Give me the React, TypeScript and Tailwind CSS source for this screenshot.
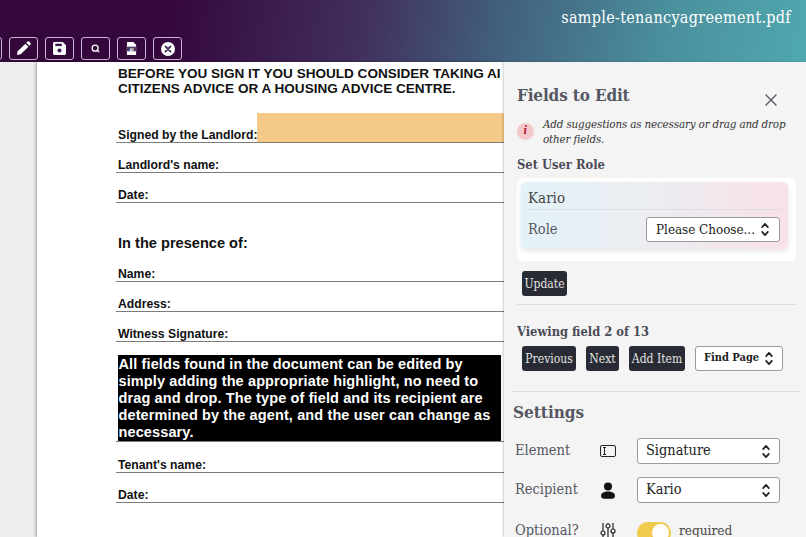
import React from "react";
import { X, Search } from "lucide-react";

const serif = "font-['DejaVu_Serif_Condensed','DejaVu_Serif',serif]";

function Chevs({ className = "" }: { className?: string }) {
  return (
    <svg viewBox="0 0 10 18" className={className} fill="none" stroke="currentColor" strokeWidth="1.8" strokeLinecap="round" strokeLinejoin="round">
      <path d="M2 6.5 5 3l3 3.5" />
      <path d="M2 11.5 5 15l3-3.5" />
    </svg>
  );
}

function ToolBtn({ children }: { children?: React.ReactNode }) {
  return (
    <div className="w-[29px] h-[23px] shrink-0 rounded-[3px] border border-[#c9b5d3] flex items-center justify-center text-white">
      {children}
    </div>
  );
}

function DocRow({ label }: { label: string }) {
  return (
    <div className="flex items-end h-[30px] border-b border-[#7c7c7c] pl-[2px] text-[12.2px] font-bold text-[#111] leading-[14px]">
      {label}
    </div>
  );
}

function DarkBtn({ children, className = "" }: { children: React.ReactNode; className?: string }) {
  return (
    <div className={"h-[25px] rounded-[3px] bg-[#292b34] text-[#e4e4e4] text-[12px] flex items-center justify-center whitespace-nowrap " + className}>
      {children}
    </div>
  );
}

function Select({ label, className = "" }: { label: string; className?: string }) {
  return (
    <div className={"bg-white border border-[#9a9a9a] rounded-[3px] flex items-center justify-between text-[#222] " + className}>
      <span className="whitespace-nowrap">{label}</span>
      <Chevs className="w-[10px] h-[17px] text-[#222] shrink-0" />
    </div>
  );
}

export default function App() {
  return (
    <div className="w-[806px] h-[537px] overflow-hidden flex flex-col bg-[#eeeeee]">
      <header className="h-[62px] shrink-0 bg-[linear-gradient(100deg,#33073a_0%,#35093e_22%,#41305c_45%,#42607e_62%,#4a8f9c_82%,#50a8ae_100%)] flex flex-col">
        <div className={"h-[25px] flex justify-end pr-[15px] pt-[9px] text-white text-[16px] leading-[18px] tracking-[0.3px] whitespace-nowrap " + serif}>
          sample-tenancyagreement.pdf
        </div>
        <div className="flex gap-[7px] pt-[12px] -ml-[27px]">
          <ToolBtn />
          <ToolBtn>
            <svg viewBox="0 0 16 16" className="w-[15px] h-[15px]" fill="white">
              <path d="M1 15l.8-4L10 2.8l3.2 3.2L5 14.2z" />
              <path d="M11 1.8l1-1a1.6 1.6 0 0 1 2.2 0l1 1a1.6 1.6 0 0 1 0 2.2l-1 1z" />
            </svg>
          </ToolBtn>
          <ToolBtn>
            <svg viewBox="0 0 14 14" className="w-[13px] h-[13px]">
              <path d="M1.5 0H10.5L14 3.5V12.5A1.5 1.5 0 0 1 12.5 14H1.5A1.5 1.5 0 0 1 0 12.5V1.5A1.5 1.5 0 0 1 1.5 0Z" fill="white" />
              <rect x="2.5" y="1.8" width="7" height="2.6" fill="#3a1a4a" />
              <circle cx="7" cy="9.2" r="2.2" fill="#3a1a4a" />
            </svg>
          </ToolBtn>
          <ToolBtn><Search size={9} strokeWidth={3.5} /></ToolBtn>
          <ToolBtn>
            <svg viewBox="0 0 12 14" className="w-[11px] h-[13px]">
              <path d="M1 0h7l3 3v11H1z" fill="white" />
              <rect x="0" y="5" width="12" height="5" fill="#4a3a66" />
              <text x="6" y="9.4" textAnchor="middle" fontSize="4.5" fill="white" fontFamily="Liberation Sans" fontWeight="700">AI</text>
            </svg>
          </ToolBtn>
          <ToolBtn>
            <svg viewBox="0 0 14 14" className="w-[14px] h-[14px]">
              <circle cx="7" cy="7" r="7" fill="white" />
              <path d="M4.5 4.5l5 5M9.5 4.5l-5 5" stroke="#41305c" strokeWidth="1.8" strokeLinecap="round" />
            </svg>
          </ToolBtn>
        </div>
      </header>

      <main className="flex-1 flex min-h-0">
        <div className="w-[37px] shrink-0 bg-[#eeeeee]" />
        <div className="w-[467px] shrink-0 bg-white shadow-[-1px_0_3px_rgba(0,0,0,0.35)] pl-[79px] font-['Liberation_Sans',sans-serif] overflow-hidden">
          <div className="pt-[4px] pl-[2px] text-[13.56px] font-bold leading-[15px] text-[#111] whitespace-nowrap">
            <div>BEFORE YOU SIGN IT YOU SHOULD CONSIDER TAKING AI</div>
            <div>CITIZENS ADVICE OR A HOUSING ADVICE CENTRE.</div>
          </div>
          <div className="mt-[17px] flex items-end h-[30px] border-b border-[#7c7c7c] pl-[2px] text-[12.2px] font-bold text-[#111] leading-[14px]">
            <span className="whitespace-nowrap">Signed by the Landlord:</span>
            <div className="flex-1 h-[29px] bg-[#f5c987]" />
          </div>
          <DocRow label="Landlord's name:" />
          <DocRow label="Date:" />
          <div className="mt-[31px] pl-[2px] text-[14.6px] font-bold leading-[18px] text-[#111]">In the presence of:</div>
          <DocRow label="Name:" />
          <DocRow label="Address:" />
          <DocRow label="Witness Signature:" />
          <div className="mt-[13px] ml-[2px] mr-[3px] h-[86px] bg-black text-white text-[14.5px] font-bold leading-[17px] pl-[0.5px] pt-[1px] tracking-[0.12px] overflow-hidden">
            <div className="whitespace-nowrap">All fields found in the document can be edited by</div>
            <div className="whitespace-nowrap">simply adding the appropriate highlight, no need to</div>
            <div className="whitespace-nowrap">drag and drop. The type of field and its recipient are</div>
            <div className="whitespace-nowrap">determined by the agent, and the user can change as</div>
            <div className="whitespace-nowrap">necessary.</div>
          </div>
          <div className="border-t border-[#7c7c7c] mb-[1px]" />
          <DocRow label="Tenant's name:" />
          <DocRow label="Date:" />
        </div>

        <aside className={"flex-1 min-w-0 bg-[#f4f4f4] shadow-[-1px_0_2px_rgba(0,0,0,0.2)] overflow-hidden " + serif}>
          <div className="pl-[13px] pr-[10px] pt-[21px]">
            <div className="flex justify-between items-start">
              <h2 className="text-[17px] font-bold tracking-[-0.15px] text-[#555763] leading-[24px]">Fields to Edit</h2>
              <X size={20} strokeWidth={1.6} className="text-[#55565f] mt-[7px] mr-[15px]" />
            </div>
            <div className="mt-[7px] flex gap-[9px] items-center">
              <div className="w-[17px] h-[17px] rounded-full bg-[#f3c9cc] text-[#b5202f] text-[11px] font-bold italic flex items-center justify-center shrink-0">i</div>
              <p className="text-[11.5px] italic tracking-[-0.15px] leading-[14.5px] text-[#333]">Add suggestions as necessary or drag and drop other fields.</p>
            </div>
            <div className="mt-[10px] text-[12.8px] font-bold text-[#4a4b55] leading-[18px]">Set User Role</div>
            <div className="mt-[4px] bg-white rounded-[6px] pt-[4px] pl-[4px] pr-[8px] pb-[12px] h-[83px]">
              <div className="rounded-[5px] bg-[linear-gradient(90deg,#e3f2f7,#ecedf2_50%,#f8e1e7)] shadow-[0_2px_5px_rgba(0,0,0,0.1)] pl-[7px] pr-[8px] pt-[5px] h-[67px]">
                <div className="text-[15px] text-[#444] leading-[22px] border-b border-[#dcdde2] h-[23px]">Kario</div>
                <div className="mt-[7px] flex items-center justify-between">
                  <span className="text-[14.5px] text-[#555763]">Role</span>
                  <Select label="Please Choose..." className="w-[134px] h-[25px] px-[9px] text-[13.3px]" />
                </div>
              </div>
            </div>
            <div className="mt-[10px] pl-[5px]"><DarkBtn className="w-[45px]">Update</DarkBtn></div>
          </div>
          <div className="ml-[13px] mr-[10px] mt-[8px] border-t border-[#dcdcdc]" />
          <div className="pl-[13px] pr-[10px]">
            <div className="mt-[18px] text-[12.8px] font-bold text-[#4a4b55] leading-[18px]">Viewing field 2 of 13</div>
            <div className="mt-[5px] pl-[5px] flex gap-[10px] items-center">
              <DarkBtn className="w-[54px]">Previous</DarkBtn>
              <DarkBtn className="w-[33px]">Next</DarkBtn>
              <DarkBtn className="w-[56px]">Add Item</DarkBtn>
              <Select label="Find Page" className="w-[88px] h-[25px] px-[8px] text-[11px] font-bold" />
            </div>
          </div>
          <div className="ml-[9px] mr-[6px] mt-[20px] border-t border-[#dcdcdc]" />
          <div className="pl-[9px] pr-[26px]">
            <div className="mt-[8px] text-[17px] font-bold text-[#555763] leading-[24px]">Settings</div>
            <div className="mt-[14px] flex items-center h-[26px]">
              <span className="w-[87px] pl-[2px] text-[14.5px] text-[#555763]">Element</span>
              <svg viewBox="0 0 16 12" className="w-[16px] h-[12px] text-[#222] mr-[21px]" fill="none" stroke="currentColor" strokeWidth="1">
                <rect x="0.5" y="0.5" width="15" height="11" rx="1.5" />
                <path d="M3 2.5h3M4.5 2.5v7M3 9.5h3" />
              </svg>
              <Select label="Signature" className="flex-1 h-[26px] px-[8px] text-[14.4px]" />
            </div>
            <div className="mt-[13px] flex items-center h-[26px]">
              <span className="w-[87px] pl-[2px] text-[14.5px] text-[#555763]">Recipient</span>
              <svg viewBox="0 0 16 17" className="w-[16px] h-[17px] text-[#111] mr-[21px]" fill="currentColor">
                <circle cx="8" cy="4.6" r="4" />
                <path d="M1 14c0-3 2.6-4.5 7-4.5S15 11 15 14c0 1.8-1.4 2.800-3 2.800H4C2.400 16.800 1 15.800 1 14Z" />
              </svg>
              <Select label="Kario" className="flex-1 h-[26px] px-[8px] text-[14.4px]" />
            </div>
            <div className="mt-[17px] flex items-start h-[26px]">
              <span className="w-[87px] pl-[2px] text-[14.5px] text-[#555763]">Optional?</span>
              <svg viewBox="0 0 16 16" className="w-[16px] h-[16px] text-[#222] mr-[21px] mt-[2px]" fill="none" stroke="currentColor" strokeWidth="1.2">
                <path d="M3 1v8M3 13v3M8 1v1M8 6v10M13 1v6M13 11v5" />
                <circle cx="3" cy="11" r="2" />
                <circle cx="8" cy="4" r="2" />
                <circle cx="13" cy="9" r="2" />
              </svg>
              <div className="w-[34px] h-[22px] rounded-full bg-[#f0cb50] relative shrink-0 mt-[2px]">
                <div className="absolute right-[2px] top-[2px] w-[17px] h-[17px] rounded-full bg-white" />
              </div>
              <span className="ml-[8px] text-[13.5px] text-[#444] leading-[20px]">required</span>
            </div>
          </div>
        </aside>
      </main>
    </div>
  );
}
